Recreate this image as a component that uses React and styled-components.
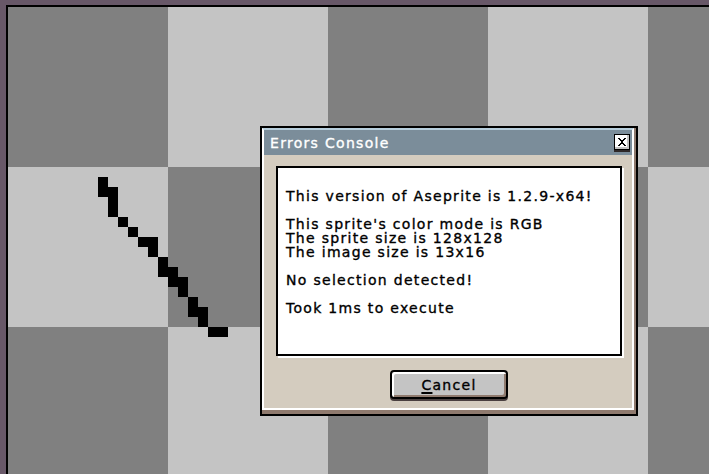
import styled, { createGlobalStyle } from "styled-components";

const GlobalStyle = createGlobalStyle`
  html, body {
    margin: 0;
    padding: 0;
    overflow: hidden;
  }
`;

const STROKE = [
  [0, 0], [0, 1],
  [1, 1], [1, 2], [1, 3],
  [2, 4],
  [3, 5],
  [4, 6], [5, 6],
  [5, 7],
  [6, 8], [6, 9],
  [7, 9], [7, 10],
  [8, 10], [8, 11],
  [9, 12], [9, 13],
  [10, 13], [10, 14],
  [11, 15], [12, 15],
];

const LINES = [
  ["This version of Aseprite is 1.2.9-x64!"],
  [
    "This sprite's color mode is RGB",
    "The sprite size is 128x128",
    "The image size is 13x16",
  ],
  ["No selection detected!"],
  ["Took 1ms to execute"],
];

const App = () => {
  return (
    <>
      <GlobalStyle />
      <Screen>
        <Canvas>
          <Sprite viewBox="0 0 13 16" shapeRendering="crispEdges">
            {STROKE.map(([x, y]) => (
              <rect key={`${x}-${y}`} x={x} y={y} width="1" height="1" fill="#000" />
            ))}
          </Sprite>

          <Window>
            <Frame>
              <TitleBar>
                <Title>Errors Console</Title>
                <CloseBox>
                  <svg width="8" height="8" viewBox="0 0 8 8" shapeRendering="crispEdges">
                    <path d="M0 0h2v1h-2zM1 1h2v1h-2zM2 2h4v1h-4zM3 3h2v2h-2zM2 5h4v1h-4zM1 6h2v1h-2zM0 7h2v1h-2zM6 0h2v1h-2zM5 1h2v1h-2zM5 6h2v1h-2zM6 7h2v1h-2z" fill="#000" />
                  </svg>
                </CloseBox>
              </TitleBar>
              <Body>
                <Console>
                  {LINES.map((group, i) => (
                    <Group key={i}>
                      {group.map((line) => (
                        <Line key={line}>{line}</Line>
                      ))}
                    </Group>
                  ))}
                </Console>
                <ButtonRow>
                  <CancelButton type="button">
                    <u>C</u>ancel
                  </CancelButton>
                </ButtonRow>
              </Body>
            </Frame>
          </Window>
        </Canvas>
      </Screen>
    </>
  );
};

export default App;

const Screen = styled.div`
  width: 709px;
  height: 474px;
  box-sizing: border-box;
  padding: 5px 0 0 6px;
  background: #685868;
  display: flex;
  overflow: hidden;
  font-family: "DejaVu Sans", "Liberation Sans", sans-serif;
`;

const Canvas = styled.div`
  position: relative;
  flex: 1;
  border-top: 2px solid #000;
  border-left: 2px solid #000;
  background-color: #c4c4c4;
  background-image: conic-gradient(
    #c4c4c4 25%,
    #808080 0 50%,
    #c4c4c4 0 75%,
    #808080 0
  );
  background-size: 320px 320px;
`;

const Sprite = styled.svg`
  position: absolute;
  left: 90px;
  top: 170px;
  width: 130px;
  height: 160px;
`;

const Window = styled.div`
  position: absolute;
  left: 252px;
  top: 119px;
  width: 378px;
  box-sizing: border-box;
  border: 2px solid #000;
  padding: 0 2px 4px 0;
  background: #8f7a6e;
`;

const Frame = styled.div`
  border-left: 2px solid #fff;
  border-right: 2px solid #fff;
  border-bottom: 2px solid #fff;
  border-top: 2px solid #b6cddb;
  background: #d4ccbf;
  display: flex;
  flex-direction: column;
`;

const TitleBar = styled.div`
  height: 25px;
  background: #7b8d9a;
  display: flex;
  align-items: center;
  justify-content: space-between;
  padding: 0 2px 0 6px;
`;

const Title = styled.span`
  color: #fff;
  font-size: 14px;
  letter-spacing: 1.3px;
  line-height: 14px;
  -webkit-text-stroke: 0.35px #fff;
`;

const CloseBox = styled.div`
  width: 16px;
  height: 16px;
  box-sizing: border-box;
  margin-top: -2px;
  border: 1px solid #000;
  background: #fff;
  box-shadow: inset -2px -2px 0 #c4c4c4, 0 2px 0 #2e2828;
  display: flex;
  align-items: center;
  justify-content: center;
`;

const Body = styled.div`
  display: flex;
  flex-direction: column;
  padding: 11px 10px 7px 12px;
`;

const Console = styled.div`
  height: 190px;
  box-sizing: border-box;
  border: 2px solid #000;
  background: #fff;
  box-shadow: 2px 2px 0 #fff;
  padding: 21px 8px 0;
  color: #000;
  font-size: 14px;
  letter-spacing: 1.3px;
  -webkit-text-stroke: 0.35px #000;
`;

const Group = styled.div`
  margin-bottom: 14px;
`;

const Line = styled.div`
  line-height: 14px;
  white-space: pre;
`;

const ButtonRow = styled.div`
  display: flex;
  justify-content: center;
  margin-top: 14px;
  padding-bottom: 2px;
`;

const CancelButton = styled.button`
  width: 118px;
  height: 29px;
  box-sizing: border-box;
  border: 2px solid #000;
  border-radius: 4px;
  background: #c4c4c4;
  box-shadow: inset 2px 2px 0 #fff, inset -2px -2px 0 #8f7a6e, 0 2px 0 #4a4040;
  font-family: "DejaVu Sans", "Liberation Sans", sans-serif;
  font-size: 14px;
  letter-spacing: 1.3px;
  -webkit-text-stroke: 0.35px #000;
  color: #000;
  padding: 0;
  line-height: 14px;

  u {
    text-decoration-thickness: 2px;
    text-underline-offset: 2px;
  }
`;
